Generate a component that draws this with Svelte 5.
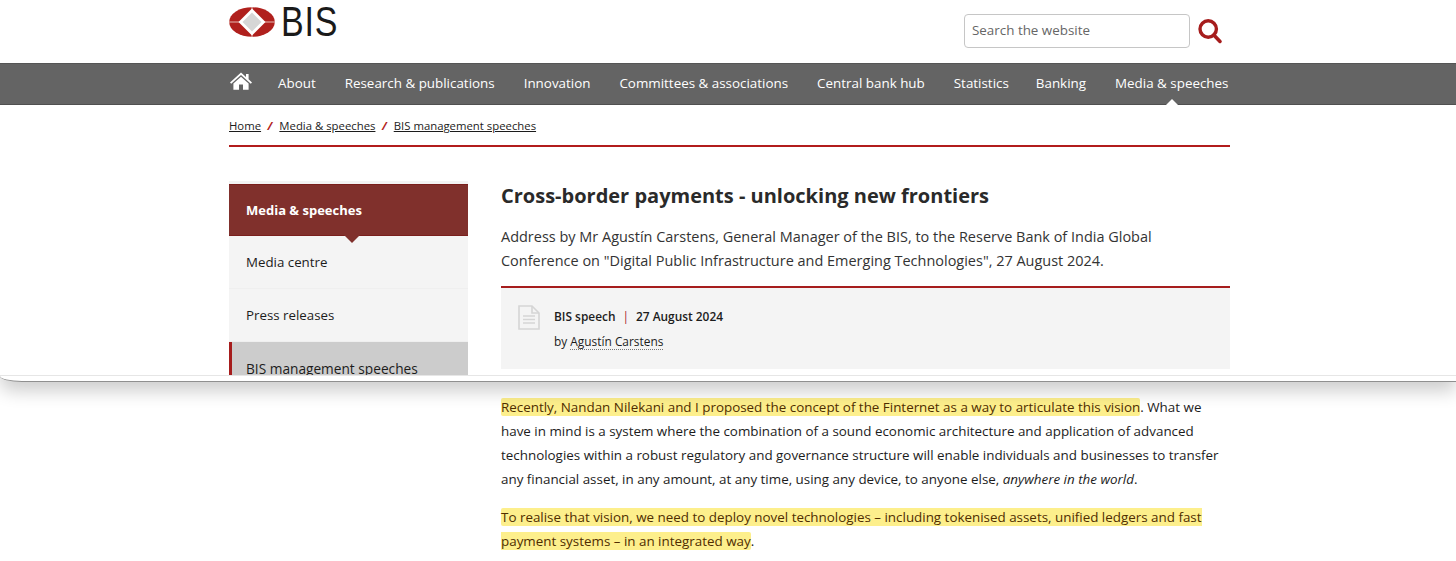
<script>
  const nav = ['About','Research & publications','Innovation','Committees & associations','Central bank hub','Statistics','Banking','Media & speeches'];
</script>

<div class="page">
  <div class="card">
    <div class="clip">
      <header class="top">
        <div class="wrap top-row">
          <div class="logo">
            <svg width="46" height="30" viewBox="0 0 46 30" aria-hidden="true">
              <ellipse cx="23" cy="15" rx="22.800" ry="14.800" fill="#b0201d"/>
              <path d="M0 15H46M23 0V30" stroke="#e4b9b2" stroke-width="1"/>
              <path d="M23 1.500 36.500 15 23 28.500 9.500 15Z" fill="#fff"/>
              <path d="M23 5.500 32.500 15 23 24.500 13.500 15Z" fill="#d6d6d6"/>
            </svg>
            <span class="bis">BIS</span>
          </div>
          <div class="search">
            <div class="input">Search the website</div>
            <svg width="26" height="26" viewBox="0 0 26 26" aria-hidden="true">
              <circle cx="11.200" cy="11" r="8.200" fill="none" stroke="#a61d1d" stroke-width="3.400"/>
              <path d="M16.800 17 23 23.400" stroke="#a61d1d" stroke-width="3.600" stroke-linecap="round"/>
            </svg>
          </div>
        </div>
      </header>

      <nav class="nav">
        <div class="wrap nav-row">
          <svg class="home" width="22" height="18" viewBox="0 0 22 18" aria-hidden="true">
            <path d="M11 0.600 16 5V2h2.600v5.300L22 10.400l-1.200 1.300L11 3.100 1.200 11.700 0 10.400Z" fill="#fff"/>
            <path d="M11 4.700 18.600 11.400V17.800H13V12.600H9V17.800H3.400V11.400Z" fill="#fff"/>
          </svg>
          {#each nav as item, i}
            <span class="nav-item" class:tight={item === 'Statistics'} class:current={i === nav.length - 1}>{item}</span>
          {/each}
        </div>
      </nav>

      <div class="wrap">
        <div class="crumbs">
          <span class="crumb">Home</span><i>/</i><span class="crumb">Media &amp; speeches</span><i>/</i><span class="crumb">BIS management speeches</span>
        </div>

        <div class="cols">
          <aside class="side">
            <div class="side-head">Media &amp; speeches</div>
            <div class="side-item">Media centre</div>
            <div class="side-item">Press releases</div>
            <div class="side-item active">BIS management speeches</div>
          </aside>
          <main class="main">
            <h1>Cross-border payments - unlocking new frontiers</h1>
            <p class="lead">Address by Mr Agustín Carstens, General Manager of the BIS, to the Reserve Bank of India Global Conference on "Digital Public Infrastructure and Emerging Technologies", 27 August 2024.</p>
            <div class="meta">
              <svg class="doc" width="22" height="25" viewBox="0 0 22 25" aria-hidden="true">
                <path d="M1 1H14L21 8V24H1Z" fill="none" stroke="#d5d5d5" stroke-width="1.600"/>
                <path d="M14 1V8H21" fill="none" stroke="#d5d5d5" stroke-width="1.600"/>
                <path d="M5 11H17M5 14.500H17M5 18H17" stroke="#d5d5d5" stroke-width="1.300"/>
              </svg>
              <div>
                <div class="meta-line"><b>BIS speech</b><span class="sep">|</span><b>27 August 2024</b></div>
                <div class="by">by <span class="author">Agustín Carstens</span></div>
              </div>
            </div>
          </main>
        </div>
      </div>
    </div>
  </div>

  <div class="wrap article">
    <p><mark>Recently, Nandan Nilekani and I proposed the concept of the Finternet as a way to articulate this vision</mark>. What we<br>have in mind is a system where the combination of a sound economic architecture and application of advanced<br>technologies within a robust regulatory and governance structure will enable individuals and businesses to transfer<br>any financial asset, in any amount, at any time, using any device, to anyone else, <em>anywhere in the world</em>.</p>
    <p><mark>To realise that vision, we need to deploy novel technologies – including tokenised assets, unified ledgers and fast<br>payment systems – in an integrated way</mark>.</p>
  </div>
</div>

<style>
  :global(body) { margin: 0; background: #fff; overflow: hidden; }
  .page { width: 1456px; height: 561px; overflow: hidden; font-family: "Open Sans", sans-serif; color: #1c1c1c; position: relative; }
  .card {
    height: 382px; box-sizing: border-box; background: #fff;
    border-bottom: 1px solid #8f8f8f; border-bottom-left-radius: 22px 6px;
    box-shadow: 0 9px 18px rgba(0,0,0,.2);
    position: relative; z-index: 1;
  }
  .clip { height: 375px; overflow: hidden; border-bottom: 1px solid #e6e6e6; }
  .wrap { width: 1001px; margin-left: 229px; }
  .top { height: 63px; }
  .top-row { display: flex; justify-content: space-between; }
  .logo { display: flex; align-items: center; height: 44px; }
  .bis { font: 400 42px/44px "Liberation Sans", sans-serif; color: #1a1a1a; transform: scaleX(.81); transform-origin: left; margin-left: 6px; letter-spacing: 1px; white-space: nowrap; }
  .search { display: flex; align-items: center; gap: 7px; padding: 14px 7px 0 0; align-self: flex-start; }
  .input { width: 217px; height: 32px; border: 1px solid #c6c6c6; border-radius: 4px; font-size: 13.400px; line-height: 31px; padding-left: 7px; color: #666; }
  .nav { height: 42px; box-sizing: border-box; background: #646464; border-top: 1px solid #555; border-bottom: 1px solid #505050; }
  .nav-row { display: flex; align-items: center; height: 40px; position: relative; color: #fff; font-size: 13.400px; }
  .home { margin: -6px 26px 0 1px; flex: none; }
  .nav-item { margin-right: 29px; white-space: nowrap; line-height: 38px; padding-bottom: 2px; }
  .nav-item.tight { margin-right: 27px; }
  .current { position: relative; margin-right: 0; }
  .current::after { content: ""; position: absolute; left: 50%; margin-left: -6px; bottom: -1px; border: 6px solid transparent; border-top: 0; border-bottom: 6px solid #fff; }
  .crumbs { height: 42px; box-sizing: border-box; padding-top: 13px; border-bottom: 2px solid #b21c1c; font-size: 11.350px; line-height: 16px; margin-bottom: 34px; }
  .crumb { text-decoration: underline; color: #1c1c1c; }
  .crumbs i { color: #b21c1c; margin: 0 7px 0 6.500px; font-weight: 700; }
  .cols { display: flex; gap: 33px; }
  .side { width: 239px; flex: none; border-top: 3px solid #f3f3f3; margin-top: 0; }
  .side-head { height: 52px; background: #80302c; color: #fff; font-weight: 700; font-size: 13px; line-height: 50px; padding-left: 17px; position: relative; box-sizing: border-box; border-top: 1px solid #7a1f1c; border-bottom: 1px solid #7a1f1c; }
  .side-head::after { content: ""; position: absolute; left: 115px; top: 100%; border: 8px solid transparent; border-bottom: 0; border-top: 8px solid #80302c; z-index: 1; }
  .side-item { height: 53px; background: #f4f4f4; font-size: 13.300px; line-height: 53px; padding-left: 17px; border-bottom: 1px solid #efefef; box-sizing: border-box; }
  .side-item.active { background: #cccccc; border-left: 3px solid #a61d1d; padding-left: 14px; font-size: 13.700px; font-weight: 500; }
  .main { width: 729px; }
  h1 { margin: 0; font-size: 20px; font-weight: 700; line-height: 28px; color: #2a2a2a; padding-top: 1px; }
  .lead { margin: 15px 0 0; font-size: 14.480px; line-height: 24px; color: #333; }
  .meta { margin-top: 13px; height: 83px; background: #f4f4f4; border-top: 2px solid #a61d1d; display: flex; padding: 17px 0 0 17px; box-sizing: border-box; gap: 14px; }
  .doc { flex: none; }
  .meta-line { font-size: 11.900px; line-height: 18px; margin-top: 2px; }
  .meta-line b { font-weight: 600; }
  .sep { color: #a61d1d; margin: 0 7px; }
  .by { font-size: 11.900px; line-height: 18px; margin-top: 7px; }
  .author { border-bottom: 1px dotted #777; }
  .article { padding-top: 13px; margin-left: 501px; width: 760px; }
  .article p { margin: 0 0 14px; font-size: 13.400px; line-height: 24px; color: #1c1c1c; }
  mark { background: #fdef8c; color: #4f2d00; border-radius: 2px; }
</style>
